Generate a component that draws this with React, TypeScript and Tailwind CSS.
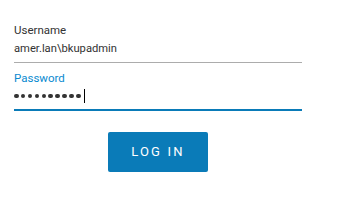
export default function App() {
  const dots = Array.from({ length: 10 });
  return (
    <div className="w-[348px] h-[201px] bg-white font-['Roboto',sans-serif]">
      <div className="pl-[14px] pt-[23px] w-[302px]">
        <div className="border-b border-[#acacac] pb-[5px]">
          <div className="text-[11.5px] leading-[14px] text-[#333]">Username</div>
          <div className="mt-[4px] text-[11.2px] leading-[16px] text-[#333]">amer.lan\bkupadmin</div>
        </div>
        <div className="mt-[8px] border-b-2 border-[#0a7bb8] pb-[6px]">
          <div className="text-[11.5px] leading-[14px] text-[#0a8ad0]">Password</div>
          <div className="mt-[4px] flex items-center h-[14px]">
            <div className="flex gap-[2.4px]">
              {dots.map((_, i) => (
                <span key={i} className="w-[4.5px] h-[4.5px] rounded-full bg-[#333]" />
              ))}
            </div>
            <span className="w-px h-[14px] bg-black ml-[3px]" />
          </div>
        </div>
      </div>
      <div className="mt-[21px] pl-[108px]">
        <button className="w-[100px] h-[40px] rounded-[2px] bg-[#0a7bb8] text-white text-[13px] tracking-[2.2px]">
          LOG IN
        </button>
      </div>
    </div>
  );
}
